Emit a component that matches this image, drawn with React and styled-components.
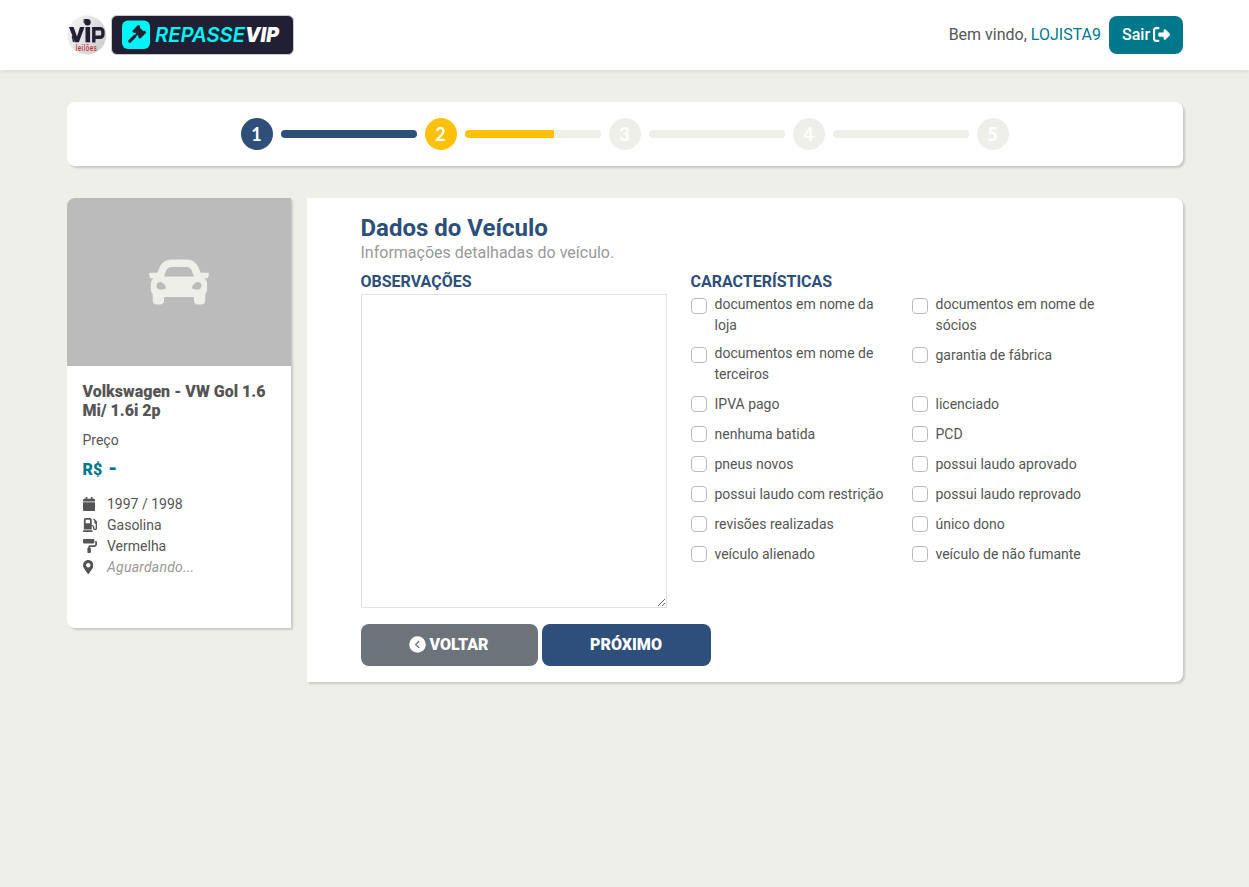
import React from "react";
import styled, { createGlobalStyle, css } from "styled-components";
import { FaCar, FaCalendar, FaGasPump, FaPaintRoller, FaMapMarkerAlt } from "react-icons/fa";
import { FaRightFromBracket } from "react-icons/fa6";

const Global = createGlobalStyle`
  *, *::before, *::after { box-sizing: border-box; }
  body {
    margin: 0;
    background: #eeefe9;
    color: #555;
    font: 400 16px/1.5 Roboto, sans-serif;
  }
  #root { min-height: 100vh; }
`;

const navy = "#2d4f7a";
const teal = "#00788c";
const shadow = "2px 2px 2px rgba(0, 0, 0, 0.15)";

const Header = styled.header`
  height: 70px;
  background: #fff;
  box-shadow: 0 2px 4px rgba(0, 0, 0, 0.075);
`;
const Container = styled.div`
  width: 1116px;
  margin: 0 auto;
`;
const HeaderInner = styled(Container)`
  height: 100%;
  display: flex;
  align-items: center;
  justify-content: space-between;
`;
const Brand = styled.div`
  display: flex;
  gap: 4px;
  align-items: center;
`;
const Logo = styled.svg`
  display: block;
`;
const User = styled.div`
  display: flex;
  align-items: center;
  gap: 7.5px;
  line-height: 24px;
`;
const UserName = styled.span`
  color: ${teal};
`;
const LogoutButton = styled.button`
  display: flex;
  align-items: center;
  gap: 2.5px;
  width: 74px;
  height: 38px;
  padding: 0 12px 1px 13.5px;
  border: 0;
  border-radius: 8px;
  background: ${teal};
  color: #fff;
  font: 500 16px/24px Roboto, sans-serif;
  svg { flex: none; width: 17px; height: 17px; }
`;

const Stepper = styled.section`
  display: flex;
  justify-content: center;
  align-items: center;
  gap: 8px;
  height: 64px;
  margin-top: 32px;
  background: #fff;
  border-radius: 8px;
  box-shadow: ${shadow};
`;
const stepColors = { done: navy, current: "#ffc107", todo: "#eeefe9" };
const Step = styled.div`
  width: 32px;
  height: 32px;
  border-radius: 50%;
  background: ${(p) => stepColors[p.$state]};
  color: #fff;
  font: 700 18px/32px Lato, sans-serif;
  text-align: center;
`;
const Track = styled.div`
  width: 136px;
  height: 8px;
  border-radius: 4px;
  overflow: hidden;
  background: #eeefe9;
`;
const Fill = styled.div`
  height: 100%;
  background: ${(p) => stepColors[p.$state]};
`;

const Main = styled.main`
  display: flex;
  align-items: flex-start;
  gap: 16px;
  margin-top: 32px;
`;
const VehicleCard = styled.aside`
  flex: none;
  width: 224px;
  height: 430px;
  overflow: hidden;
  background: #fff;
  border-radius: 8px 0 0 8px;
  box-shadow: ${shadow};
`;
const Photo = styled.div`
  display: flex;
  align-items: center;
  justify-content: center;
  height: 168px;
  background: #bbb;
  color: #eeefe9;
  svg { width: 60px; height: 60px; }
`;
const VehicleBody = styled.div`
  padding: 16px;
  font-size: 14px;
  line-height: 21px;
`;
const VehicleName = styled.h2`
  margin: 0 0 10px;
  font-size: 16px;
  line-height: 19.2px;
  font-weight: 900;
`;
const Price = styled.p`
  margin: 5px 0 12px;
  color: ${teal};
  font-size: 16px;
  line-height: 24px;
  font-weight: 900;
  span { margin-left: 2px; font-size: 20px; }
`;
const Spec = styled.div`
  display: flex;
  align-items: center;
  height: 21px;
`;
const SpecIcon = styled.span`
  display: flex;
  flex: none;
  width: 24.5px;
  margin-bottom: 1px;
  svg { flex: none; width: ${(p) => p.$width}px; height: 14px; }
`;
const Pending = styled.em`
  color: #999;
  letter-spacing: 0.22px;
`;

const Panel = styled.section`
  width: 876px;
  height: 484px;
  padding: 16px 54px;
  background: #fff;
  border-radius: 0 8px 8px 0;
  box-shadow: ${shadow};
`;
const Title = styled.h1`
  margin: 0;
  color: ${navy};
  font-size: 24px;
  line-height: 28px;
  font-weight: 700;
`;
const Subtitle = styled.p`
  margin: 0 0 7px;
  color: #999;
  line-height: 21px;
`;
const Columns = styled.div`
  display: flex;
  gap: 24px;
`;
const FieldLabel = styled.h3`
  margin: 0;
  color: ${navy};
  font-size: 16px;
  line-height: 24px;
  font-weight: 700;
`;
const Notes = styled.textarea`
  display: block;
  width: 306px;
  height: 314px;
  border: 1px solid #dee2e6;
  background: #fff;
`;
const Options = styled.div`
  display: grid;
  grid-template-columns: 221px 221px;
  row-gap: 6px;
`;
const Option = styled.label`
  display: flex;
  align-items: flex-start;
  gap: 8px;
  min-height: 24px;
  padding-bottom: 1px;
  font-size: 14px;
  line-height: 21px;
  ${(p) => !p.$wrap && css`span { padding-top: 2px; }`}
`;
const Checkbox = styled.input.attrs({ type: "checkbox" })`
  appearance: none;
  flex: none;
  width: 16px;
  height: 16px;
  margin: 4px 0 0;
  border: 1px solid #bbb;
  border-radius: 4px;
  background: #fff;
`;
const OptionText = styled.span`
  width: ${(p) => (p.$wrap ? "172px" : "auto")};
`;
const Actions = styled.div`
  display: flex;
  gap: 4px;
  margin-top: 16px;
`;
const Button = styled.button`
  display: flex;
  align-items: center;
  justify-content: center;
  gap: 3px;
  width: ${(p) => p.$width}px;
  height: 42px;
  padding: 0 0 1px;
  border: 0;
  border-radius: 8px;
  background: ${(p) => (p.$secondary ? "#6c737b" : navy)};
  color: #fff;
  font: 900 16px/24px Roboto, sans-serif;
`;

const options = [
  ["documentos em nome da loja", true],
  ["documentos em nome de sócios", true],
  ["documentos em nome de terceiros", true],
  ["garantia de fábrica"],
  ["IPVA pago"],
  ["licenciado"],
  ["nenhuma batida"],
  ["PCD"],
  ["pneus novos"],
  ["possui laudo aprovado"],
  ["possui laudo com restrição"],
  ["possui laudo reprovado"],
  ["revisões realizadas"],
  ["único dono"],
  ["veículo alienado"],
  ["veículo de não fumante"],
];

const steps = [
  { state: "done", progress: 100 },
  { state: "current", progress: 66 },
  { state: "todo", progress: 0 },
  { state: "todo", progress: 0 },
  { state: "todo" },
];

function VipLogo() {
  return (
    <Logo width="40" height="40" viewBox="0.5 0 40 40">
      <defs>
        <linearGradient id="disc" x1="0" y1="0.2" x2="1" y2="0.8">
          <stop offset="0" stopColor="#f5f4f4" />
          <stop offset="1" stopColor="#cfcccb" />
        </linearGradient>
      </defs>
      <circle cx="20.3" cy="20" r="19.5" fill="url(#disc)" />
      <circle cx="21" cy="7.3" r="3.2" fill="#201f33" />
      <path d="M17.6 8V4.5h3" fill="none" stroke="#201f33" strokeWidth="1" />
      <path d="M2.5 12h4.6l3.4 9.5 3-9.5h4.5l-5.6 15.3H8.4z" fill="#201f33" />
      <path d="M5.8 21l1.4 6" stroke="#201f33" strokeWidth="1.4" />
      <path d="M19 12h4.6v15.3H19z" fill="#201f33" />
      <path d="M27.3 27.4V13.7h6.4a2.7 2.7 0 0 1 2.7 2.7v3.2a2.7 2.7 0 0 1-2.7 2.7H28" fill="none" stroke="#201f33" strokeWidth="3.4" />
      <g transform="translate(9.2 35.8) scale(0.86 1.1)">
        <text fill="#bd3339" fontFamily="Roboto, sans-serif" fontSize="7.4" fontWeight="500" letterSpacing="0.5">leilões</text>
      </g>
    </Logo>
  );
}

function RepasseLogo() {
  return (
    <Logo width="183" height="40" viewBox="0 0 183 40">
      <rect x="0.5" y="0.5" width="182" height="39" rx="5.5" fill="#201f33" stroke="#c9c9cd" />
      <rect x="11" y="5.5" width="28" height="28.5" rx="6" fill="#00f6f6" />
      <g transform="translate(28.2 16.8) rotate(45)" fill="#201f33">
        <rect x="-5.6" y="-4.6" width="3" height="9.2" rx="1" />
        <rect x="-3.2" y="-3.4" width="6.4" height="6.8" />
        <rect x="2.6" y="-4.6" width="3" height="9.2" rx="1" />
        <rect x="-1" y="3" width="2" height="4" />
        <rect x="-1.5" y="5.2" width="3" height="9.6" rx="1.2" />
      </g>
      <g fontFamily="Inter, sans-serif" fontStyle="italic" fontSize="20">
        <text x="44" y="27" fill="#00f6f6" fontWeight="600" textLength="90" lengthAdjust="spacingAndGlyphs">REPASSE</text>
        <text x="134" y="27" fill="#fff" fontWeight="900" textLength="34" lengthAdjust="spacingAndGlyphs">VIP</text>
      </g>
    </Logo>
  );
}

function BackIcon() {
  return (
    <svg width="17" height="17" viewBox="0 0 17 17">
      <circle cx="8.5" cy="8.5" r="8.3" fill="#fff" />
      <path d="M10.2 5L6.7 8.5l3.5 3.5" fill="none" stroke="#6c737b" strokeWidth="1.3" />
    </svg>
  );
}

export default function App() {
  return (
    <>
      <Global />
      <Header>
        <HeaderInner>
          <Brand>
            <VipLogo />
            <RepasseLogo />
          </Brand>
          <User>
            <span>Bem vindo, <UserName>LOJISTA9</UserName></span>
            <LogoutButton>Sair<FaRightFromBracket /></LogoutButton>
          </User>
        </HeaderInner>
      </Header>
      <Container>
        <Stepper>
          {steps.map((s, i) => (
            <React.Fragment key={i}>
              <Step $state={s.state}>{i + 1}</Step>
              {s.progress !== undefined && (
                <Track>
                  <Fill $state={s.state} style={{ width: `${s.progress}%` }} />
                </Track>
              )}
            </React.Fragment>
          ))}
        </Stepper>
        <Main>
          <VehicleCard>
            <Photo><FaCar /></Photo>
            <VehicleBody>
              <VehicleName>Volkswagen - VW Gol 1.6 Mi/ 1.6i 2p</VehicleName>
              <div>Preço</div>
              <Price>R$ <span>-</span></Price>
              <Spec><SpecIcon $width={12.25}><FaCalendar /></SpecIcon>1997 / 1998</Spec>
              <Spec><SpecIcon $width={14}><FaGasPump /></SpecIcon>Gasolina</Spec>
              <Spec><SpecIcon $width={14}><FaPaintRoller /></SpecIcon>Vermelha</Spec>
              <Spec><SpecIcon $width={10.5}><FaMapMarkerAlt /></SpecIcon><Pending>Aguardando...</Pending></Spec>
            </VehicleBody>
          </VehicleCard>
          <Panel>
            <Title>Dados do Veículo</Title>
            <Subtitle>Informações detalhadas do veículo.</Subtitle>
            <Columns>
              <div>
                <FieldLabel>OBSERVAÇÕES</FieldLabel>
                <Notes />
              </div>
              <div>
                <FieldLabel>CARACTERÍSTICAS</FieldLabel>
                <Options>
                  {options.map(([text, wrap]) => (
                    <Option key={text} $wrap={wrap}>
                      <Checkbox />
                      <OptionText $wrap={wrap}>{text}</OptionText>
                    </Option>
                  ))}
                </Options>
              </div>
            </Columns>
            <Actions>
              <Button $secondary $width={177}><BackIcon />VOLTAR</Button>
              <Button $width={169}>PRÓXIMO</Button>
            </Actions>
          </Panel>
        </Main>
      </Container>
    </>
  );
}
